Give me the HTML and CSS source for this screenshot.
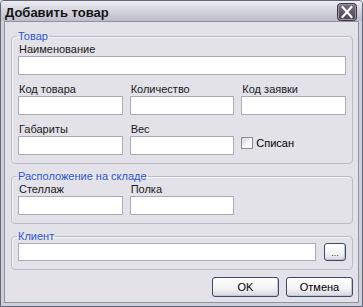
FILE: index.html
```html
<!DOCTYPE html>
<html lang="ru">
<head>
<meta charset="utf-8">
<title>Добавить товар</title>
<link rel="stylesheet" href="styles.css">
</head>
<body>
<div class="window">
  <div class="titlebar">
    <span class="title">Добавить товар</span>
    <span class="close" aria-label="Закрыть">
      <svg width="20" height="18" viewBox="0 0 20 18">
        <defs>
          <linearGradient id="cg" x1="0" y1="0" x2="0" y2="1">
            <stop offset="0" stop-color="#7a7280"/>
            <stop offset="1" stop-color="#4a4350"/>
          </linearGradient>
        </defs>
        <rect x="0.5" y="0.5" width="19" height="17" rx="3" fill="url(#cg)" stroke="#3c3844"/>
        <rect x="1.5" y="1.5" width="17" height="15" rx="2" fill="none" stroke="#9a94a0" stroke-width="1"/>
        <path d="M5.5 4 L14.5 14 M14.5 4 L5.5 14" stroke="#ffffff" stroke-width="2" stroke-linecap="square"/>
      </svg>
    </span>
  </div>
  <div class="client">
    <fieldset class="group">
      <legend>Товар</legend>
      <div class="field">
        <label>Наименование</label>
        <span class="input"></span>
      </div>
      <div class="row">
        <div class="field"><label>Код товара</label><span class="input"></span></div>
        <div class="field"><label>Количество</label><span class="input"></span></div>
        <div class="field"><label>Код заявки</label><span class="input"></span></div>
      </div>
      <div class="row">
        <div class="field"><label>Габариты</label><span class="input"></span></div>
        <div class="field"><label>Вес</label><span class="input"></span></div>
        <div class="field check-field">
          <span class="check"><span class="box"></span><span>Списан</span></span>
        </div>
      </div>
    </fieldset>
    <fieldset class="group">
      <legend>Расположение на складе</legend>
      <div class="row">
        <div class="field"><label>Стеллаж</label><span class="input"></span></div>
        <div class="field"><label>Полка</label><span class="input"></span></div>
      </div>
    </fieldset>
    <fieldset class="group client-group">
      <legend>Клиент</legend>
      <div class="client-row">
        <span class="input wide"></span>
        <span class="btn small">...</span>
      </div>
    </fieldset>
    <div class="actions">
      <span class="btn">OK</span>
      <span class="btn">Отмена</span>
    </div>
  </div>
</div>
</body>
</html>
```
FILE: styles.css
```css
* { box-sizing: border-box; }
html, body { margin: 0; padding: 0; background: #e3e2e9; }
body {
  font-family: "Liberation Sans", Arial, sans-serif;
  font-size: 11px;
  color: #000;
}
.window {
  width: 363px;
  height: 307px;
  border: 1px solid #5f6778;
  border-radius: 4px 4px 0 0;
  background: #cfcfd8;
  display: flex;
  flex-direction: column;
  overflow: hidden;
}
.titlebar {
  height: 20px;
  flex: none;
  display: flex;
  align-items: center;
  justify-content: space-between;
  padding: 0 5px 0 4px;
  background: linear-gradient(#ececf2, #d6d6de 45%, #bdbdca);
}
.title {
  font-weight: bold;
  font-size: 13px;
  color: #141414;
  padding-top: 2px;
}
.close {
  display: block;
  width: 20px;
  height: 18px;
  margin-top: 2px;
}
.close svg { display: block; }
.client {
  flex: 1;
  margin: 0 3px 3px;
  border: 1px solid #8e92a0;
  background: #e3e2e9;
  padding: 8px 5px 0 6px;
  display: flex;
  flex-direction: column;
}
.group {
  margin: 0;
  border: 1px solid #bcbcc8;
  border-radius: 4px;
  padding: 0 6px 8px;
  box-shadow: inset 1px 1px 0 #f4f4f8;
  min-width: 0;
}
.group + .group { margin-top: 6px; }
.group legend {
  color: #2a55d0;
  padding: 0 1px;
  margin-left: -1px;
  line-height: 13px;
}
.field {
  display: flex;
  flex-direction: column;
  min-width: 0;
}
.field label {
  display: block;
  line-height: 13px;
  height: 13px;
  padding-left: 1px;
  color: #1a1a1a;
}
.row {
  display: grid;
  grid-template-columns: 1fr 1fr 1fr;
  column-gap: 7px;
}
.group > .field + .row,
.row + .row { margin-top: 8px; }
.input {
  display: block;
  height: 19px;
  background: #fff;
  border: 1px solid #a9adb8;
}
.check-field { justify-content: flex-end; }
.check {
  display: flex;
  align-items: center;
  gap: 3px;
  height: 19px;
  padding-bottom: 6px;
}
.box {
  display: inline-block;
  width: 12px;
  height: 12px;
  border: 1px solid #8a8e98;
  background: linear-gradient(135deg, #d4d4da, #ffffff 70%);
}
.client-group { padding-top: 0; padding-bottom: 8px; }
.client-row {
  display: flex;
  align-items: center;
  gap: 8px;
}
.input.wide { flex: 1; height: 18px; }
.btn {
  display: flex;
  align-items: center;
  justify-content: center;
  width: 67px;
  height: 20px;
  border: 1px solid #3d4a6b;
  border-radius: 3px;
  background: linear-gradient(#ffffff, #f2f2f5 60%, #d6d6de);
  box-shadow: inset -1px -1px 0 #c4c4cf;
  color: #000;
}
.btn.small {
  width: 22px;
  height: 18px;
  font-size: 9px;
  padding-top: 2px;
  color: #333;
}
.actions {
  display: flex;
  justify-content: flex-end;
  gap: 7px;
  margin-top: 7px;
  padding-right: 0;
}
```
